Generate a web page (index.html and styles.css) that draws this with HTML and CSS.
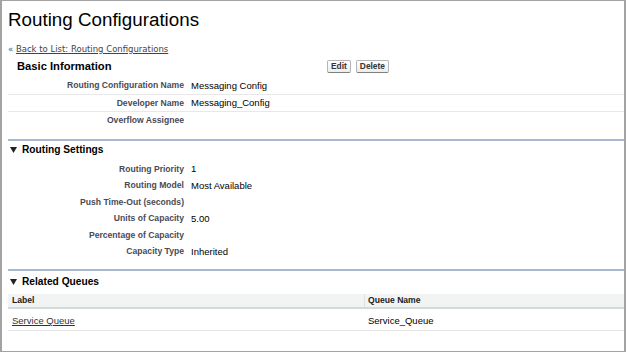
FILE: index.html
```html
<!DOCTYPE html>
<html>
<head>
<meta charset="utf-8">
<link rel="stylesheet" href="styles.css">
</head>
<body>
<div class="frame">
  <h1 class="page-title">Routing Configurations</h1>
  <div class="breadcrumb">« <a href="#">Back to List: Routing Configurations</a></div>

  <div class="block-header">
    <h2 class="block-title">Basic Information</h2>
    <div class="buttons">
      <button class="btn">Edit</button>
      <button class="btn">Delete</button>
    </div>
  </div>
  <div class="detail basic">
    <div class="row"><div class="label">Routing Configuration Name</div><div class="value">Messaging Config</div></div>
    <div class="row"><div class="label">Developer Name</div><div class="value">Messaging_Config</div></div>
    <div class="row last"><div class="label">Overflow Assignee</div><div class="value"></div></div>
  </div>

  <div class="section routing">
    <h3 class="section-title"><svg class="tri" width="7" height="6" viewBox="0 0 7 6"><polygon points="0,0 7,0 3.5,6" fill="#222"/></svg>Routing Settings</h3>
    <div class="detail plain">
      <div class="row"><div class="label">Routing Priority</div><div class="value">1</div></div>
      <div class="row"><div class="label">Routing Model</div><div class="value">Most Available</div></div>
      <div class="row"><div class="label">Push Time-Out (seconds)</div><div class="value"></div></div>
      <div class="row"><div class="label">Units of Capacity</div><div class="value">5.00</div></div>
      <div class="row"><div class="label">Percentage of Capacity</div><div class="value"></div></div>
      <div class="row"><div class="label">Capacity Type</div><div class="value">Inherited</div></div>
    </div>
  </div>

  <div class="section related">
    <h3 class="section-title"><svg class="tri" width="7" height="6" viewBox="0 0 7 6"><polygon points="0,0 7,0 3.5,6" fill="#222"/></svg>Related Queues</h3>
    <div class="list">
      <div class="list-row head"><div class="cell c1">Label</div><div class="cell c2">Queue Name</div></div>
      <div class="list-row data"><div class="cell c1"><a href="#">Service Queue</a></div><div class="cell c2">Service_Queue</div></div>
    </div>
  </div>
</div>
</body>
</html>
```

FILE: styles.css
```css
html, body {
  margin: 0;
  padding: 0;
  background: #fff;
}
.frame {
  width: 626px;
  height: 352px;
  box-sizing: border-box;
  border: 1px solid #a3a3a3;
  border-left-width: 2px;
  border-right-width: 2px;
  padding-left: 6px;
  font-family: "Liberation Sans", Arial, sans-serif;
  color: #000;
  overflow: hidden;
}
.page-title {
  margin: 8px 0 0 0;
  font-size: 18.8px;
  line-height: 22px;
  font-weight: normal;
  color: #000;
}
.breadcrumb {
  margin-top: 12px;
  font-family: "DejaVu Sans", Verdana, sans-serif;
  font-size: 8.5px;
  line-height: 12px;
  color: #555;
}
.breadcrumb a {
  color: #444;
  text-decoration: underline;
}
.block-header {
  display: flex;
  align-items: center;
  height: 18px;
  margin-top: 2px;
}
.block-title {
  width: 310px;
  margin: 0;
  padding-left: 9px;
  font-size: 11.2px;
  font-weight: bold;
  line-height: 16px;
}
.buttons {
  display: flex;
  gap: 5px;
}
.btn {
  font-family: "Liberation Sans", Arial, sans-serif;
  font-size: 8.4px;
  font-weight: bold;
  color: #333;
  height: 13px;
  line-height: 11px;
  padding: 0 3px;
  border: 1px solid #b5b5b5;
  border-bottom-color: #7f7f7f;
  border-radius: 2px;
  background: linear-gradient(#fff, #ededed);
}
.detail {
  margin-top: 2px;
}
.row {
  display: flex;
  align-items: center;
  font-size: 9.5px;
}
.basic .row {
  border-bottom: 1px solid #e8e8e8;
  height: 16.5px;
}
.basic .row.last {
  border-bottom: none;
}
.plain .row {
  height: 16.5px;
}
.label {
  width: 176px;
  flex: none;
  text-align: right;
  font-size: 8.6px;
  font-weight: bold;
  color: #4a4a56;
}
.value {
  padding-left: 7px;
  color: #000;
}
.section {
  border-top: 2px solid #a9b7d1;
}
.routing {
  margin-top: 10px;
}
.related {
  margin-top: 9px;
}
.section-title {
  display: flex;
  align-items: center;
  margin: 0;
  height: 18px;
  padding-left: 2px;
  font-size: 10.2px;
  font-weight: bold;
}
.related .section-title {
  padding-top: 2px;
}
.tri {
  margin-right: 5px;
}
.list {
  margin-top: 3px;
}
.list-row {
  display: flex;
  align-items: center;
  font-size: 9.5px;
  border-bottom: 1px solid #e6e6e6;
}
.list-row.head {
  height: 13px;
  background: #f2f3f3;
  border-bottom: 2px solid #d4dadc;
  font-size: 8.6px;
  font-weight: bold;
  color: #222;
}
.list-row.data {
  height: 22px;
  box-sizing: border-box;
  padding-top: 3px;
}
.cell {
  box-sizing: border-box;
  padding-left: 4px;
  height: 100%;
  display: flex;
  align-items: center;
}
.c1 {
  width: 356px;
}
.head .c2 {
  border-left: 1px solid #e0e0e0;
  padding-left: 3px;
}
.c2 {
  flex: 1;
}
.list-row a {
  color: #333;
  text-decoration: underline;
}
```
